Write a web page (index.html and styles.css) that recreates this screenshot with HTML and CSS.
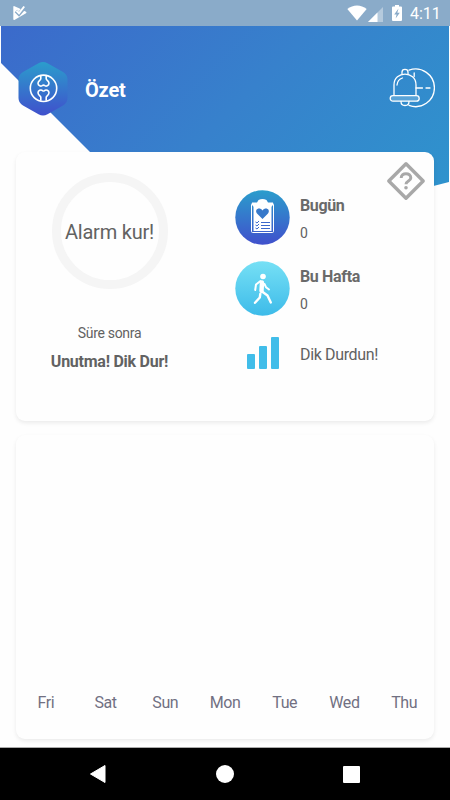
FILE: index.html
```html
<!DOCTYPE html>
<html lang="tr">
    <head>
        <meta charset="UTF-8">
        <meta name="viewport" content="width=device-width, initial-scale=1.0">
        <link rel="stylesheet" href="styles.css">
        <title>Özet</title>
    </head>
    <body>
        <div class="header-bg"></div>

        <div class="status-bar">
            <svg class="play-icon" width="14" height="16" viewBox="0 0 14 16">
                <path d="M0.3 2Q0.3 0.8 1.5 1.2L5.5 3L9.5 5L13 6.8Q14 7.5 13 8.2L1.8 14.8Q0.3 15.4 0.3 14Z" fill="#fff"/>
                <path d="M3 6L6 9L12 2" fill="none" stroke="#8aabc9" stroke-width="3.6"/>
                <path d="M3.5 5.8L6 8.3L11.2 1.5" fill="none" stroke="#fff" stroke-width="2"/>
            </svg>
            <svg class="wifi-icon" width="20" height="16" viewBox="0 0 20 16">
                <path d="M0.3 4C6 -0.8 14 -0.8 19.7 4L10 15.5Z" fill="#fff"/>
            </svg>
            <svg class="signal-icon" width="15" height="15" viewBox="0 0 15 15">
                <path d="M15 0V15H0Z" fill="#b5cadd"/>
                <path d="M9.5 5.5V15H0Z" fill="#fff"/>
            </svg>
            <svg class="battery-icon" width="10" height="16" viewBox="0 0 10 16">
                <path d="M3 0H7V1.5H9Q10 1.5 10 2.5V15Q10 16 9 16H1Q0 16 0 15V2.5Q0 1.5 1 1.5H3Z" fill="#fff"/>
                <path d="M6.5 3.5L2.2 9.4H4.6L3.6 13.5L7.8 7.8H5.3Z" fill="#8aabc9"/>
            </svg>
            <span class="clock">4:11</span>
        </div>

        <header>
            <svg class="logo" width="50" height="56" viewBox="0 0 50 56">
                <defs>
                    <linearGradient id="blue" x1="0" y1="0" x2="0" y2="1">
                        <stop offset="0" stop-color="#2b9dcc"/>
                        <stop offset="1" stop-color="#4050cc"/>
                    </linearGradient>
                </defs>
                <path d="M20.5 2.2Q25 -0.3 29.5 2.2L45 11Q49.5 13.5 49.5 18.5V37Q49.5 42 45 44.5L29.5 53.3Q25 55.8 20.5 53.3L5 44.5Q0.5 42 0.5 37V18.5Q0.5 13.5 5 11Z" fill="url(#blue)"/>
                <g fill="none" stroke="#fff" stroke-width="1.6" stroke-linejoin="round">
                    <circle cx="25.5" cy="27.3" r="13.2"/>
                    <path d="M22.8 14.8V17.8C22.8 19.3 20 19.8 20 22.3C20 24.8 23 25.8 24.5 24.5Q25.5 23.8 26.5 24.5C28 25.8 31 24.8 31 22.3C31 19.8 28.2 19.3 28.2 17.8V14.8"/>
                    <path d="M22.8 39.8V36.3C22.8 35.1 20 34.3 20 31.8C20 29.3 23 28.3 24.5 29.6Q25.5 30.3 26.5 29.6C28 28.3 31 29.3 31 31.8C31 34.3 28.2 35.1 28.2 36.3V39.8"/>
                </g>
            </svg>
            <h1>Özet</h1>
            <svg class="alarm-icon" width="46" height="42" viewBox="0 0 46 42" fill="none" stroke="#fff" stroke-width="1.3" stroke-linecap="round" stroke-linejoin="round">
                <path d="M20 3.2A18.8 18.8 0 1 1 20 38.4M25.2 6V9.5M27 21H33.5M37 21H41"/>
                <path d="M5 28V18C5 3.5 27 3.5 27 18V28"/>
                <path d="M8 18Q8.5 12.5 13.5 11"/>
                <path d="M13 7V5Q13 2.3 16 2.3Q19 2.3 19 5V7"/>
                <rect x="1.2" y="28.6" width="29" height="5.6" rx="2.8" fill="#59a3d7"/>
                <path d="M12 34.5Q12 38.5 16 38.5Q20 38.5 20 34.5"/>
            </svg>
        </header>

        <main>
            <section class="card summary">
                <svg class="help-icon" width="40" height="40" viewBox="0 0 40 40" fill="none" stroke="#a8a8a8" stroke-linejoin="round">
                    <path d="M20 2.8L37.2 20L20 37.2L2.8 20Z" stroke-width="3.4"/>
                    <path d="M15.2 17C15.2 11.2 24.8 11.2 24.8 17C24.8 20 20 20 20 23.2" stroke-width="3"/>
                    <circle cx="20" cy="26.8" r="1.8" fill="#a8a8a8" stroke="none"/>
                </svg>

                <div class="alarm">
                    <div class="ring">Alarm kur!</div>
                    <p class="after">Süre sonra</p>
                    <p class="reminder">Unutma! Dik Dur!</p>
                </div>

                <div class="stats">
                    <div class="stat">
                        <svg width="55" height="55" viewBox="0 0 55 55">
                            <circle cx="27.5" cy="27.5" r="27.2" fill="url(#blue)"/>
                            <rect x="16.5" y="13.5" width="22" height="29" rx="1" fill="none" stroke="#fff" stroke-width="1"/>
                            <path d="M18.5 15.5H36.5V41H18.5Z" fill="#fff"/>
                            <path d="M17 12.5H22L23.5 10Q27.5 8 31.5 10L33 12.5H38V15L36 17H19L17 15Z" fill="#fff"/>
                            <path d="M27.5 29L22 23.5C19 19.5 24.5 16.5 27.5 20.5C30.5 16.5 36 19.5 33 23.5Z" fill="#3779ca"/>
                            <path d="M26 32.5H35M26 35.5H35M26 38.5H35" stroke="#3b67cb" stroke-width="1"/>
                            <path d="M20.5 32L22 33L24 31M20.5 35L22 36L24 34M20.5 38L22 39L24 37" fill="none" stroke="#3b67cb" stroke-width="1"/>
                        </svg>
                        <div>
                            <h2>Bugün</h2>
                            <p>0</p>
                        </div>
                    </div>
                    <div class="stat">
                        <svg width="55" height="55" viewBox="0 0 55 55">
                            <defs>
                                <linearGradient id="sky" x1="0" y1="0" x2="0" y2="1">
                                    <stop offset="0" stop-color="#76e0f5"/>
                                    <stop offset="1" stop-color="#3dbbe9"/>
                                </linearGradient>
                            </defs>
                            <circle cx="27.5" cy="27.5" r="27.2" fill="url(#sky)"/>
                            <circle cx="28" cy="15.5" r="2.8" fill="#fff"/>
                            <g fill="none" stroke="#fff" stroke-linecap="round" stroke-linejoin="round">
                                <path d="M25.5 20L21 23.5L20.2 29" stroke-width="2"/>
                                <path d="M29.5 23L31 26.2L34 28.5" stroke-width="2"/>
                                <path d="M27 21.5L26.5 30" stroke-width="4.4"/>
                                <path d="M27 30.5L32.5 34.5L35.8 41.5" stroke-width="2.4"/>
                                <path d="M25.3 33L24.8 36.5L20 41.8" stroke-width="2.4"/>
                            </g>
                        </svg>
                        <div>
                            <h2>Bu Hafta</h2>
                            <p>0</p>
                        </div>
                    </div>
                    <div class="stat posture">
                        <div class="bars">
                            <i class="low"></i>
                            <i class="mid"></i>
                            <i class="high"></i>
                        </div>
                        <span>Dik Durdun!</span>
                    </div>
                </div>
            </section>

            <section class="card chart">
                <div class="days">
                    <span>Fri</span>
                    <span>Sat</span>
                    <span>Sun</span>
                    <span>Mon</span>
                    <span>Tue</span>
                    <span>Wed</span>
                    <span>Thu</span>
                </div>
            </section>
        </main>

        <nav>
            <svg width="16" height="18" viewBox="0 0 16 18"><path d="M15 0.5V17.5L0.5 9Z" fill="#fff" stroke="#fff" stroke-linejoin="round"/></svg>
            <svg width="18" height="18" viewBox="0 0 18 18"><circle cx="9" cy="9" r="9" fill="#fff"/></svg>
            <svg width="17" height="17" viewBox="0 0 17 17"><rect width="17" height="17" rx="1" fill="#fff"/></svg>
        </nav>
    </body>
</html>
```

FILE: styles.css
```css
* {
    box-sizing: border-box;
}

body {
    margin: 0;
    height: 800px;
    display: flex;
    flex-direction: column;
    position: relative;
    overflow: hidden;
    background: #fefefe;
    font-family: Roboto, "Liberation Sans", sans-serif;
    color: #626262;
}

h1, h2, p {
    margin: 0;
}

svg {
    display: block;
    flex-shrink: 0;
}

/* slanted blue shape behind the title and the first card */
.header-bg {
    position: absolute;
    top: 26px;
    left: 1px;
    width: 448px;
    height: 180px;
    background: linear-gradient(135deg, #3b6acb 0%, #3781cc 50%, #2e94cd 100%);
    clip-path: polygon(0 0, 100% 0, 100% 156px, 370px 176px, 139px 176px, 0 37px);
}

.status-bar {
    height: 26px;
    flex-shrink: 0;
    display: flex;
    align-items: center;
    padding: 0 10px 0 13px;
    background: #8aabc9;
    position: relative;
}

.play-icon {
    margin-right: auto;
}

.signal-icon {
    margin: 2px 9px 0 1px;
}

.battery-icon {
    margin-right: 8px;
}

.clock {
    color: #fff;
    font-size: 16px;
    line-height: 26px;
    padding-top: 2px;
    width: 30px;
    white-space: nowrap;
}

header {
    height: 126px;
    flex-shrink: 0;
    display: flex;
    align-items: flex-start;
    padding: 35px 15px 0 18px;
    position: relative;
}

header h1 {
    margin: 16px 0 0 17px;
    color: #fff;
    font-size: 20px;
    letter-spacing: -0.2px;
    line-height: 26px;
    font-weight: bold;
}

.alarm-icon {
    margin: 6px 0 0 auto;
}

main {
    flex-grow: 1;
    display: flex;
    flex-direction: column;
    gap: 14px;
    padding: 0 16px 8px;
    position: relative;
}

.card {
    background: #fefefe;
    border-radius: 9px;
    box-shadow: 0 2px 4px rgba(0, 0, 0, 0.08);
}

.summary {
    height: 269px;
    display: flex;
    position: relative;
}

.help-icon {
    position: absolute;
    top: 9px;
    right: 8px;
}

.alarm {
    width: 187px;
    padding-top: 21px;
    display: flex;
    flex-direction: column;
    align-items: center;
}

.ring {
    width: 116px;
    height: 116px;
    padding-top: 2px;
    border: 9px solid #f5f5f5;
    border-radius: 50%;
    display: flex;
    align-items: center;
    justify-content: center;
    font-size: 20px;
    letter-spacing: -0.2px;
    white-space: nowrap;
}

.after {
    margin-top: 34px;
    font-size: 14px;
    letter-spacing: -0.3px;
    line-height: 20px;
}

.reminder {
    margin-top: 9px;
    font-size: 16px;
    letter-spacing: -0.25px;
    line-height: 20px;
    font-weight: bold;
}

.stats {
    padding: 38px 0 0 32px;
    display: flex;
    flex-direction: column;
    gap: 16px;
}

.stat {
    height: 55px;
    display: flex;
    gap: 10px;
}

.stat h2 {
    margin-top: 6px;
    font-size: 16px;
    letter-spacing: -0.35px;
    line-height: 20px;
    font-weight: bold;
    color: #6a6a6a;
}

.stat p {
    margin-top: 7px;
    font-size: 14px;
    line-height: 20px;
}

.posture {
    height: 32px;
    margin-top: 5px;
    padding-left: 12px;
    gap: 21px;
    font-size: 16px;
    letter-spacing: -0.35px;
    line-height: 36px;
}

.bars {
    display: flex;
    align-items: flex-end;
    gap: 4px;
}

.bars i {
    width: 8px;
    border-radius: 1px;
    background: #41bde9;
}

.bars .low {
    height: 15px;
}

.bars .mid {
    height: 23px;
}

.bars .high {
    height: 32px;
}

.chart {
    flex-grow: 1;
    display: flex;
    align-items: flex-end;
}

.days {
    flex-grow: 1;
    display: flex;
    padding-bottom: 26px;
    font-size: 16px;
    letter-spacing: -0.4px;
    line-height: 20px;
    color: #717082;
}

.days span {
    flex: 1 1 0;
    text-align: center;
}

nav {
    height: 53px;
    flex-shrink: 0;
    display: flex;
    align-items: center;
    justify-content: space-between;
    padding: 0 90px;
    background: #000;
    border-top: 1px solid #aaa;
}
```
